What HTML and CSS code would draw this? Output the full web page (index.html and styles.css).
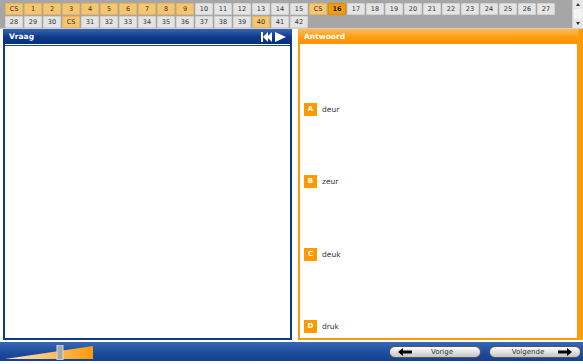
FILE: index.html
```html
<!doctype html>
<html>
<head>
<meta charset="utf-8">
<title>Oefening</title>
<link rel="stylesheet" href="styles.css">
</head>
<body>
<div class="topbar">
	<div class="tabs">
		<span class="done">CS</span><span class="done">1</span><span class="done">2</span><span class="done">3</span><span class="done">4</span><span class="done">5</span><span class="done">6</span><span class="done">7</span><span class="done">8</span><span class="done">9</span><span>10</span><span>11</span><span>12</span><span>13</span><span>14</span><span>15</span><span class="done">CS</span><span class="current">16</span><span>17</span><span>18</span><span>19</span><span>20</span><span>21</span><span>22</span><span>23</span><span>24</span><span>25</span><span>26</span><span>27</span>
		<span>28</span><span>29</span><span>30</span><span class="done">CS</span><span>31</span><span>32</span><span>33</span><span>34</span><span>35</span><span>36</span><span>37</span><span>38</span><span>39</span><span class="done">40</span><span>41</span><span>42</span>
	</div>
	<div class="scroll">
		<span class="up"></span>
		<span class="thumb"></span>
		<span class="down"></span>
	</div>
</div>

<div class="main">
	<div class="panel question">
		<div class="head">
			<span>Vraag</span>
			<div class="controls">
				<svg width="12" height="10" viewBox="0 0 12 10"><rect x="0" y="0" width="2" height="10" fill="#fff"/><polygon points="2,5 7,0 7,10" fill="#fff"/><polygon points="6,5 11,0 11,10" fill="#fff"/></svg>
				<svg width="11" height="10" viewBox="0 0 11 10"><polygon points="0,0 11,5 0,10" fill="#fff"/></svg>
			</div>
		</div>
		<div class="body"></div>
	</div>
	<div class="panel answer">
		<div class="head"><span>Antwoord</span></div>
		<div class="body">
			<div class="option"><b>A</b>deur</div>
			<div class="option"><b>B</b>zeur</div>
			<div class="option"><b>C</b>deuk</div>
			<div class="option"><b>D</b>druk</div>
		</div>
	</div>
</div>

<div class="bottombar">
	<div class="slider">
		<svg width="90" height="15" viewBox="0 0 90 15">
			<defs>
				<linearGradient id="ramp" x1="0" x2="1" y1="0" y2="0">
					<stop offset="0" stop-color="#fde9c4"/>
					<stop offset="1" stop-color="#ff9a0a"/>
				</linearGradient>
			</defs>
			<polygon points="0,14 88,1 88,14" fill="url(#ramp)"/>
			<rect x="52" y="0" width="6" height="15" fill="#a9a9a9" stroke="#d9d9d9" stroke-width="1"/>
		</svg>
	</div>
	<div class="nav">
		<span class="btn prev">
			<svg width="14" height="8" viewBox="0 0 14 8"><polygon points="0,4 5,0 5,2.5 14,2.5 14,5.5 5,5.5 5,8" fill="#000"/></svg>
			<em>Vorige</em>
		</span>
		<span class="btn next">
			<em>Volgende</em>
			<svg width="14" height="8" viewBox="0 0 14 8"><polygon points="14,4 9,0 9,2.5 0,2.5 0,5.5 9,5.5 9,8" fill="#000"/></svg>
		</span>
	</div>
</div>
</body>
</html>
```

FILE: styles.css
```css
* {
	margin: 0;
	padding: 0;
	box-sizing: border-box;
}

body {
	width: 583px;
	height: 364px;
	background: #fff;
	font-family: "DejaVu Sans", Verdana, sans-serif;
	overflow: hidden;
}

.topbar {
	display: flex;
	height: 29px;
	background: #a6a6a6;
	border-bottom: 1px solid #d0d0d0;
}

.tabs {
	flex: 1;
	display: flex;
	flex-wrap: wrap;
	align-content: flex-start;
	gap: 1px 1px;
	padding: 3px 0 0 5px;
}

.tabs span {
	width: 18px;
	height: 12px;
	background: #e4e4e4;
	border: 1px solid #d2d2d2;
	border-radius: 1px;
	font-size: 6.5px;
	line-height: 10px;
	text-align: center;
	color: #333;
}

.tabs span.done {
	background: #f5c672;
	border-color: #eab45a;
}

.tabs span.current {
	background: #f59d00;
	border-color: #e08c00;
	font-weight: bold;
	color: #222;
}

.scroll {
	width: 11px;
	display: flex;
	flex-direction: column;
	background: #e8e8e8;
	border-left: 1px solid #cfcfcf;
}

.scroll .up,
.scroll .down {
	height: 9px;
	position: relative;
}

.scroll .up::after,
.scroll .down::after {
	content: "";
	position: absolute;
	left: 3px;
	top: 3px;
	border-left: 2.5px solid transparent;
	border-right: 2.5px solid transparent;
}

.scroll .up::after {
	border-bottom: 3px solid #333;
}

.scroll .down::after {
	border-top: 3px solid #333;
}

.scroll .thumb {
	flex: 1;
	margin: 0 1px;
	background: #f4f4f4;
}

.main {
	display: flex;
	gap: 6px;
	height: 311px;
	padding: 0 0 0 3px;
}

.panel {
	display: flex;
	flex-direction: column;
	border: 2px solid;
	border-top: 0;
}

.panel .head {
	height: 15px;
	display: flex;
	align-items: center;
	justify-content: space-between;
	padding: 0 4px 0 6px;
	margin: 0 -2px;
	font-size: 7.5px;
	font-weight: bold;
	color: #fff;
}

.panel .body {
	flex: 1;
	background: #fff;
	margin-top: 1px;
}

.question {
	width: 289px;
	border-color: #0d3b8c;
}

.question .head {
	background: linear-gradient(#3a64b0, #0c3a8c 55%, #062f7a);
}

.question .body {
	border-top: 1px solid #1a4898;
}

.controls {
	display: flex;
	gap: 2px;
	align-items: center;
	padding-right: 2px;
}

.answer {
	flex: 1;
	border-color: #ff9a0a;
	border-right-width: 6px;
}

.answer .head {
	background: linear-gradient(#ffbb55, #ff9d12 55%, #ff9000);
}

.answer .body {
	display: flex;
	flex-direction: column;
	justify-content: space-between;
	padding: 58px 0 5px 4px;
}

.option {
	display: flex;
	align-items: center;
	gap: 5px;
	font-size: 7.5px;
	color: #333;
}

.option b {
	width: 13px;
	height: 13px;
	background: #ff9900;
	color: #fff;
	font-size: 7px;
	text-align: center;
	line-height: 13px;
}

.bottombar {
	display: flex;
	justify-content: space-between;
	align-items: center;
	height: 19px;
	margin-top: 2px;
	background: linear-gradient(#3867b4, #1c4b9c 60%, #14408e);
}

.slider {
	display: flex;
	padding-left: 5px;
	padding-top: 2px;
}

.nav {
	display: flex;
	gap: 8px;
	padding-right: 2px;
}

.btn {
	width: 92px;
	height: 12px;
	border-radius: 6px;
	border: 1px solid #555;
	background: linear-gradient(#ffffff, #dcdcdc 60%, #c4c4c4);
	display: flex;
	align-items: center;
	padding: 0 8px;
	font-size: 7px;
	color: #333;
}

.btn em {
	font-style: normal;
	flex: 1;
	text-align: center;
}

.btn svg {
	flex: none;
}
```
